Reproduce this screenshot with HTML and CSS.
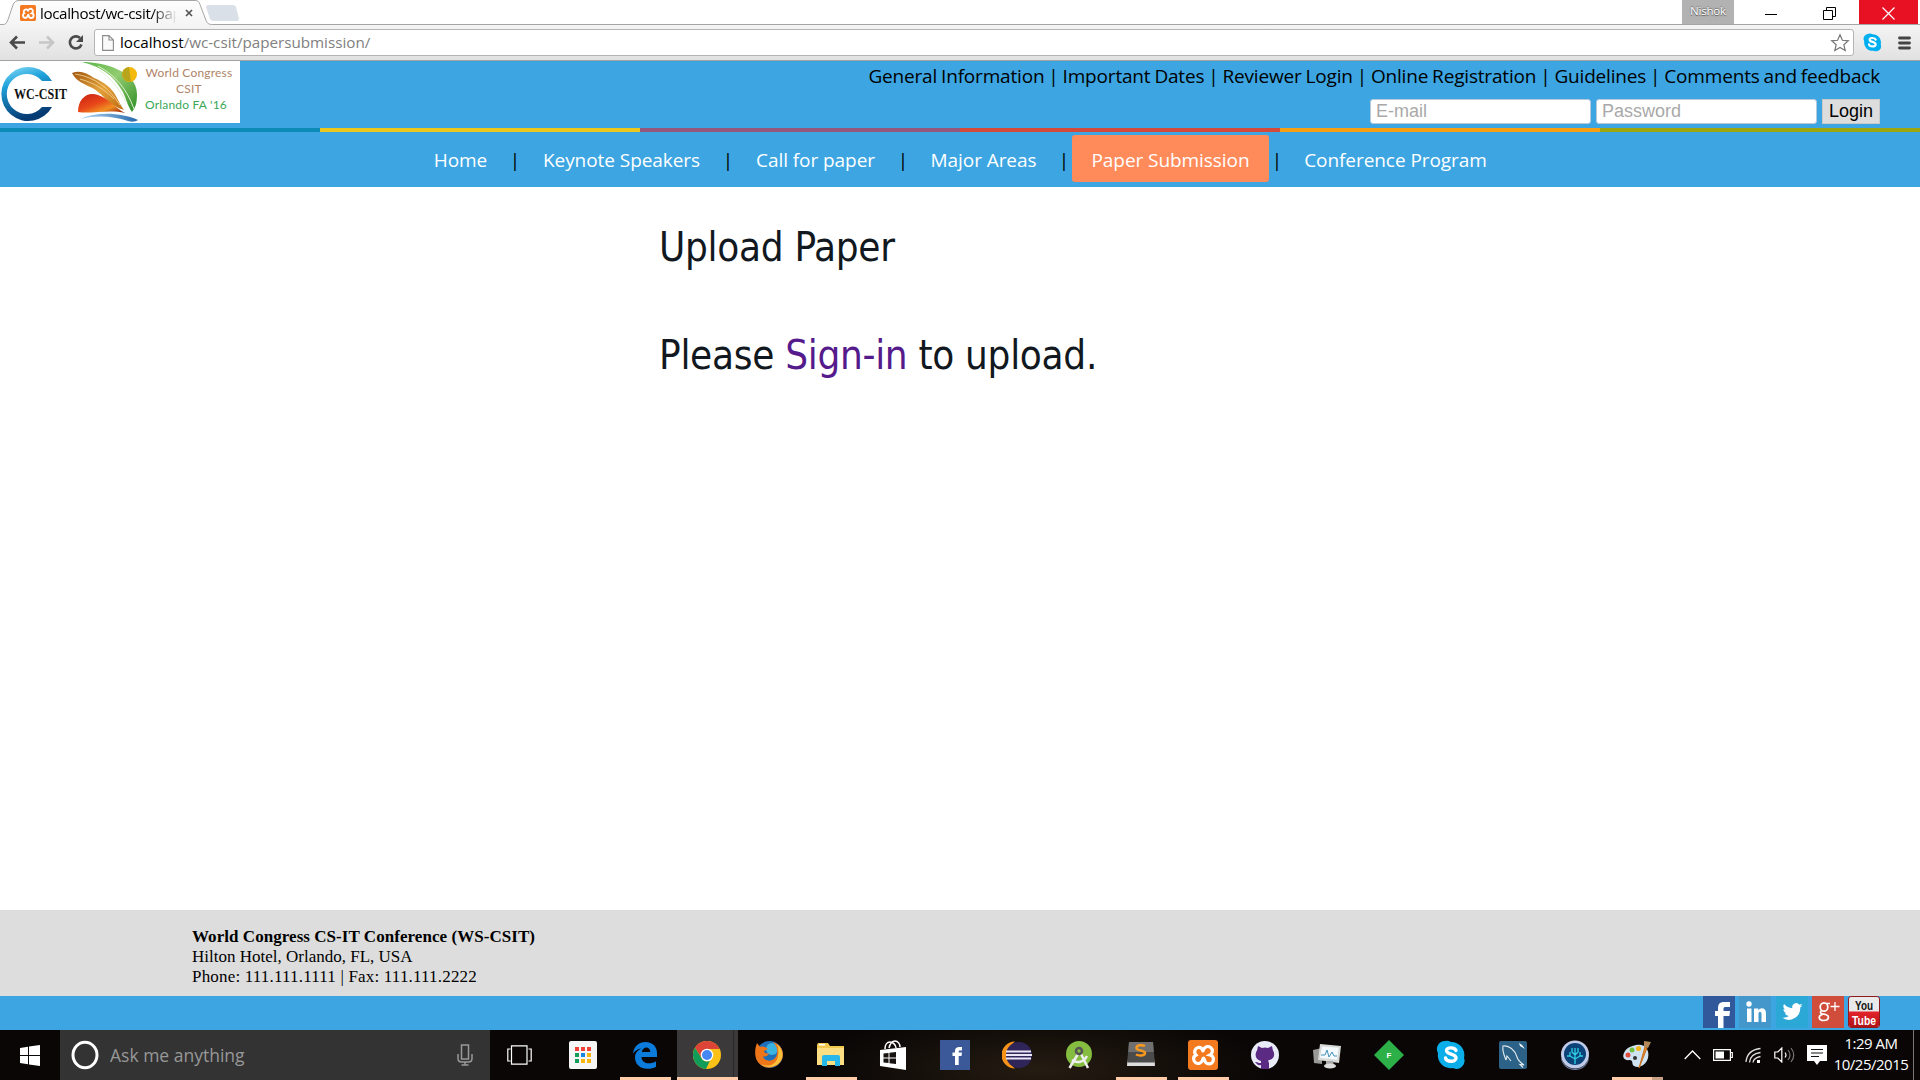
FILE: index.html
```html
<!DOCTYPE html>
<html lang="en">
<head>
<meta charset="utf-8">
<title>Paper Submission</title>
<link rel="stylesheet" href="styles.css">
</head>
<body>
<div class="tabstrip">
  <svg class="tabshape" width="1920" height="25" viewBox="0 0 1920 25">
    <defs><linearGradient id="tabg" x1="0" y1="0" x2="0" y2="1"><stop offset="0" stop-color="#fdfdfd"/><stop offset="1" stop-color="#f4f4f4"/></linearGradient></defs>
    <path d="M208 5h25q2 0 3 2l3 12q0 2-2 2h-24q-2 0-3-2l-4-12q0-2 2-2z" fill="#dae0e8"/>
    <path d="M-2 24.500H3c3 0 4-2 5-5L13 5c1-3 3-4.500 6-4.500H195c3 0 4 1 5 4l5.500 14.500c1 3.500 2.500 5.500 6 5.500H1922V27H-2z" fill="url(#tabg)" stroke="#a6a6a6"/>
  </svg>
  <div class="tab">
    <svg width="16" height="16" viewBox="0 0 30 30"><rect width="30" height="30" rx="3" fill="#f37a21"/><path d="M10 8.500a4.500 4.500 0 0 0-2 7a4.500 4.500 0 1 0 6.500 4.500q.5-2 1-2t1 2A4.500 4.500 0 1 0 22 15.500a4.500 4.500 0 1 0-6.500-5.500q-.5 2-1 0A4 4 0 0 0 10 8.500z" fill="none" stroke="#fff" stroke-width="3.500"/></svg>
    <span class="tabtitle">localhost/wc-csit/pap</span>
    <svg width="8" height="8" viewBox="0 0 8 8"><path d="M1 1l6 6M7 1L1 7" stroke="#555" stroke-width="1.700"/></svg>
  </div>
  <div class="winbtns">
    <span class="user">Nishok</span>
    <span class="wb"><svg width="12" height="12"><path d="M0 6.500h12" stroke="#000"/></svg></span>
    <span class="wb"><svg width="13" height="13" fill="none" stroke="#000"><path d="M.5 3.500h9v9h-9zM3.500 3V.5h9v9H10"/></svg></span>
    <span class="wb close"><svg width="13" height="13"><path d="M.5.5l12 12M12.500.5l-12 12" stroke="#fff" stroke-width="1.200"/></svg></span>
  </div>
</div>
<div class="toolbar">
  <svg class="navicons" width="84" height="20" viewBox="0 0 84 20" fill="none" stroke-width="2.600">
    <path d="M18 9.500H4M10 3.500l-6 6 6 6" stroke="#4a4a4a"/>
    <path d="M32 9.500h14M40 3.500l6 6-6 6" stroke="#c6c6c6"/>
    <path d="M73 5A6 6 0 1 0 74.500 11.500" stroke="#4a4a4a"/><path d="M76 2v7h-7z" fill="#4a4a4a"/>
  </svg>
  <div class="omnibox">
    <svg width="12" height="16" viewBox="0 0 12 16"><path d="M.6.6H7l4.400 4.400v10.400H.6zM7 .6V5h4.400" fill="#fafafa" stroke="#8b8b8b" stroke-width="1.100"/></svg>
    <span class="url">localhost<span>/wc-csit/papersubmission/</span></span>
    <svg width="20" height="20" viewBox="0 0 20 20"><path d="M10 1.800l2.400 5.500 5.900.5-4.500 3.900 1.400 5.900L10 14.500l-5.200 3.100 1.400-5.900L1.700 7.800l5.900-.5z" fill="#fff" stroke="#777" stroke-width="1.200"/></svg>
  </div>
  <svg width="19" height="19" viewBox="0 0 30 30"><path d="M9 1a8 8 0 0 1 6 1a13 13 0 0 1 13 16a8 8 0 0 1-11 10A13 13 0 0 1 2 13A8 8 0 0 1 9 1z" fill="#00aff0"/><path d="M20 10.500c-1-3-9.500-4-9.500 0 0 4.500 9.500 2.500 9.500 7.500 0 4.500-9.500 4-10.500 0" fill="none" stroke="#fff" stroke-width="3.400" stroke-linecap="round"/></svg>
  <svg width="13" height="14" viewBox="0 0 13 14"><path d="M1.500 2h10M1.500 7h10M1.500 12h10" stroke="#444" stroke-width="2.800" stroke-linecap="round"/></svg>
</div>

<header class="header">
  <div class="logo">
    <svg width="140" height="62" viewBox="0 0 140 62">
      <defs>
        <linearGradient id="cg" x1="0" y1="0" x2=".3" y2="1"><stop offset="0" stop-color="#8fe0f8"/><stop offset=".35" stop-color="#1fa2db"/><stop offset="1" stop-color="#063a73"/></linearGradient>
        <linearGradient id="or" x1="0" y1="0" x2="1" y2="1"><stop offset="0" stop-color="#a0560f"/><stop offset=".5" stop-color="#e3a23a"/><stop offset="1" stop-color="#c06b12"/></linearGradient>
        <linearGradient id="gr" x1="0" y1="0" x2="1" y2="1"><stop offset="0" stop-color="#58b548"/><stop offset=".45" stop-color="#93cc70"/><stop offset="1" stop-color="#2c8d26"/></linearGradient>
        <linearGradient id="rd" x1="0" y1="0" x2="1" y2="1"><stop offset="0" stop-color="#c81f12"/><stop offset=".45" stop-color="#e8481a"/><stop offset=".7" stop-color="#f09022"/><stop offset="1" stop-color="#8d0f09"/></linearGradient>
        <linearGradient id="bl"><stop offset="0" stop-color="#b8dcf5"/><stop offset="1" stop-color="#2467ac"/></linearGradient>
      </defs>
      <path d="M52 20A27 27 0 1 0 52 46H42A20 20 0 1 1 42 20z" fill="url(#cg)"/>
      <path d="M82 1c22 0 55 9 55 32 0 8-1 13-5 18-5-6-6-16-11-23C113 15 102 6 82 1z" fill="url(#gr)"/>
      <path d="M98 5c17 9 29 23 36 43M99 9c12 8 21 20 27 32" fill="none" stroke="#dff0cf" stroke-width="1"/>
      <path d="M72 12c8-3 15 0 22 5 5 2 12 6 16 10 7 7 8 14 14 22-14-4-18-12-26-18-4-4-8-5-12-7-6-3-11-6-14-12z" fill="url(#or)"/>
      <path d="M75 13c20 3 34 14 45 31M80 18c14 4 24 10 34 20" fill="none" stroke="#f7d79a" stroke-width=".8"/>
      <path d="M78 51C78 38 87 30 98 34c10 3 16 12 27 18-15-4-33 1-47-1z" fill="url(#rd)"/>
      <circle cx="129.500" cy="13.500" r="7.500" fill="#f3b90c"/><path d="M122 13a7.500 7.500 0 0 1 7-7l2 14.500a7.500 7.500 0 0 1-9-7.500z" fill="#b8a51c"/>
      <path d="M80 58c18-8 42-6 58 1-3 2-6 2-10 1-15-5-31-6-48-2z" fill="url(#bl)"/>
      <text x="14" y="38" class="lg" textLength="53" lengthAdjust="spacingAndGlyphs">WC-CSIT</text>
    </svg>
    <div class="logotext"><span>World Congress</span><span>CSIT</span><span class="green">Orlando FA '16</span></div>
  </div>
  <div class="headright">
    <div class="toplinks">General Information | Important Dates | Reviewer Login | Online Registration | Guidelines | Comments and feedback</div>
    <form class="login">
      <input type="text" placeholder="E-mail"><input type="password" placeholder="Password"><button type="button">Login</button>
    </form>
  </div>
</header>
<div class="stripe"><i class="c1"></i><i class="c2"></i><i class="c3"></i><i class="c4"></i><i class="c5"></i><i class="c6"></i></div>
<nav class="menu">
  <a class="w1">Home</a><b>|</b><a class="w2">Keynote Speakers</a><b>|</b><a class="w3">Call for paper</a><b>|</b><a class="w4">Major Areas</a><b>|</b><a class="w2 active">Paper Submission</a><b>|</b><a class="w5">Conference Program</a>
</nav>
<main class="content">
  <h1>Upload Paper</h1>
  <h1>Please <a>Sign-in</a> to upload.</h1>
</main>
<footer class="footer">
  <strong>World Congress CS-IT Conference (WS-CSIT)</strong>
  <span>Hilton Hotel, Orlando, FL, USA</span>
  <span class="phone">Phone: 111.111.1111 | Fax: 111.111.2222</span>
</footer>
<div class="social">
  <svg width="32" height="32"><rect width="32" height="32" fill="#30589b"/><path d="M15 32V20h-3v-5h3v-3c0-4 2-6 6-6h6v5h-4c-2 0-2.500.6-2.500 2v2H27l-.6 5h-5.900v12z" fill="#fff"/></svg>
  <svg width="32" height="32"><rect width="32" height="32" fill="#4397cb"/><circle cx="10" cy="8" r="2.700" fill="#fff"/><path d="M8 12.500h4.500V26H8zM15 12.500h4.300v2c2-3.500 7.700-3 7.700 2.500v9h-4.500v-8c0-3-3-3-3 0v8H15z" fill="#fff"/></svg>
  <svg width="32" height="32"><rect width="32" height="32" fill="#2ca8d6"/><path d="M26.500 9.300a8 8 0 0 1-2.300.6 4 4 0 0 0 1.700-2.200 8 8 0 0 1-2.500 1 4 4 0 0 0-7 3.600 11.500 11.500 0 0 1-8.300-4.200 4 4 0 0 0 1.200 5.400 4 4 0 0 1-1.800-.5 4 4 0 0 0 3.200 4 4 4 0 0 1-1.800.1 4 4 0 0 0 3.800 2.800A8 8 0 0 1 6 21.600 11.500 11.500 0 0 0 24.200 11.500a8 8 0 0 0 2.300-2.200z" fill="#fff"/></svg>
  <svg width="32" height="32"><rect width="32" height="32" fill="#d04c3b"/><g fill="none" stroke="#fff" stroke-width="1.700"><ellipse cx="12" cy="11" rx="3.800" ry="4.200"/><path d="M14 7.500h4M9.500 14.500c-3 3 1 3.500 4 4 4.500 1 3.500 6-1.500 6-6 0-6-5-1.500-6" /></g><path d="M23 6v9M18.500 10.500h9" stroke="#fff" stroke-width="1.300"/></svg>
  <svg width="32" height="32"><defs><linearGradient id="yr" x1="0" y1="0" x2="0" y2="1"><stop offset="0" stop-color="#e5242a"/><stop offset="1" stop-color="#b01217"/></linearGradient></defs><rect x=".5" y=".5" width="31" height="31" rx="2.500" fill="#e9e9e9" stroke="#8f1c1c"/><path d="M1 15.500h30V29q0 2-2 2H3q-2 0-2-2z" fill="url(#yr)"/><text x="7" y="13.500" class="yt" textLength="18" lengthAdjust="spacingAndGlyphs">You</text><text x="4" y="28.500" class="yt white" textLength="24" lengthAdjust="spacingAndGlyphs">Tube</text></svg>
</div>

<div class="taskbar">
  <div class="start"><svg width="20" height="21" viewBox="0 0 20 21" fill="#fff"><path d="M0 3l8-1.200V10H0zM9 1.600L20 0v10H9zM0 11h8v8.300L0 18zM9 11h11v10L9 19.400z"/></svg></div>
  <div class="search">
    <svg width="28" height="30" viewBox="0 0 28 30"><ellipse cx="14" cy="15" rx="12" ry="12.800" fill="none" stroke="#fff" stroke-width="3"/></svg>
    <span>Ask me anything</span>
    <svg width="16" height="22" viewBox="0 0 16 22" fill="none" stroke="#999" stroke-width="1.500"><rect x="4.500" y="1" width="7" height="14"/><path d="M1 10v4.500q0 3.500 3.500 3.500h7q3.500 0 3.500-3.500V10M8 18v3M4.500 21h7"/></svg>
  </div>
  <div class="taskview"><svg width="25" height="20" viewBox="0 0 25 20" fill="none" stroke="#fff" stroke-width="1.200"><path d="M4.500.8h15.500v18.400H4.500zM3.500 4H.8v12h2.700M21.500 4h2.700v12h-2.700"/></svg></div>
  <div class="apps">
    <div class="app"><svg viewBox="0 0 30 30"><rect x="1" y="1" width="28" height="28" rx="2" fill="#f6f6f6"/><path d="M7 7h4v4H7zM13 7h4v4h-4zM19 7h4v4h-4z" fill="#ef4136"/><path d="M7 13h4v4H7zM7 19h4v4H7z" fill="#149d58"/><path d="M13 13h4v4h-4z" fill="#1a86e0"/><path d="M19 13h4v4h-4zM13 19h4v4h-4zM19 19h4v4h-4z" fill="#fbb60d"/></svg></div>
    <div class="app run"><svg viewBox="0 0 30 30"><path d="M3 13.500C4 6 9 2 15.500 2 23 2 27 7 27 13v4H11.500c0 4 3.500 6.300 7 6.300 3 0 5.500-.6 7.500-2v5.500c-2.500 1.400-5 2-8.500 2C10 28.800 5 24 5 17.500c0-4 2.500-7.500 6.500-9C7.500 8.800 4.800 11 3 13.500zM11.800 12h8.500c0-6-7.500-6-8.500 0z" fill="#0b7bdc"/></svg></div>
    <div class="app run chrome"><svg viewBox="0 0 30 30"><circle cx="15" cy="15" r="14" fill="#fbc116"/><path d="M15 9h12.600A14 14 0 0 0 3 7.800L9.500 18z" fill="#dc4437"/><path d="M3 7.800L9.700 18.500A6 6 0 0 0 18 20.500L14 29A14 14 0 0 1 3 7.800z" fill="#119d59"/><circle cx="15" cy="15" r="6.300" fill="#fff"/><circle cx="15" cy="15" r="5" fill="#4587f3"/></svg></div>
    <div class="app"><svg viewBox="0 0 30 30"><circle cx="15.500" cy="14.500" r="13.500" fill="#1e6fb8"/><circle cx="18" cy="9" r="6" fill="#39b3df"/><path d="M2 6l1-3 3 4c3-1 6 0 8 2l-4 2c0 2 3 3 5 2-1 4-5 4-6 3 1 6 12 7 14-2 1-5-1-9-4-12 9 3 11 10 9.500 16A14 14 0 0 1 1.200 14Q1 9 2 6z" fill="#ef7519"/><path d="M23 4c7 6 7 15 1 20-5 4-13 4-17 0 8 4 16 0 17-8 1-5 0-9-1-12z" fill="#f9c13a"/></svg></div>
    <div class="app run"><svg viewBox="0 0 30 30"><path d="M2 3h10l2 3h14v19H1V5z" fill="#f2c94f"/><path d="M1 8h27v17H1z" fill="#fcdf82"/><path d="M3 4h6v1.500H3z" fill="#fff"/><path d="M6 26V17q0-2 2-2h14q2 0 2 2v9h-5v-5h-8v5z" fill="#28b7ea"/></svg></div>
    <div class="app"><svg viewBox="0 0 30 30"><path d="M2 10l26-3v23L2 26z" fill="#fff"/><path d="M7 9c0-4 2-7 5-7s6 3 6 6M11 8c1-4 3-7 6-7s5 3 5 6" fill="none" stroke="#fff" stroke-width="1.500"/><path d="M5.500 13.500l5-.6v4.600h-5zM11.500 12.800l6.500-.8v5.500h-6.500zM5.500 18.500h5V23l-5-.6zM11.500 18.500H18V24l-6.500-.8z" fill="#15120f"/></svg></div>
    <div class="app"><svg viewBox="0 0 30 30"><rect width="30" height="30" fill="#3b5998"/><path d="M15 25V16h-2.500v-3.500H15V11c0-3 1.500-4 4.500-4H22v3.500h-2c-1 0-1.300.4-1.300 1.300v.7H22l-.5 3.500h-2.800v9z" fill="#fff"/></svg></div>
    <div class="app"><svg viewBox="0 0 30 30"><path d="M13 1.500a13.500 13.500 0 0 0 0 27A17 17 0 0 1 13 1.500z" fill="#f79319"/><circle cx="17" cy="15" r="13" fill="#2f2558"/><path d="M4 11.500h25M4 15h26M4 18.500h25" stroke="#e9e6f5" stroke-width="2"/></svg></div>
    <div class="app"><svg viewBox="0 0 30 30"><circle cx="15" cy="14" r="13" fill="#84bd3f"/><path d="M14 14L5.500 28M17 14l7 14M8 20c5 4 12 2 15-4" fill="none" stroke="#eee" stroke-width="2.500"/><circle cx="15" cy="11" r="3" fill="none" stroke="#555" stroke-width="2.500"/></svg></div>
    <div class="app run"><svg viewBox="0 0 30 30"><path d="M3 2h24l2 22H1z" fill="#4b4b4b"/><path d="M3 2h24l.8 10H2.200z" fill="#707070"/><path d="M1.500 19L1 26h28l-.5-7v3.500H1.500z" fill="#ddd"/><path d="M19 6c-3-1.500-8.500-1-8.500 2 0 3.300 8.500 1.700 8.500 5 0 3-6 3-9 1.500" fill="none" stroke="#f8981d" stroke-width="2.500"/></svg></div>
    <div class="app run"><svg viewBox="0 0 30 30"><rect width="30" height="30" rx="3" fill="#f47a20"/><path d="M10 7.500a4.500 4.500 0 0 0-2 7.500 4.500 4.500 0 1 0 6.500 5q.5-2 1-2t1 2A4.500 4.500 0 1 0 22 15a4.500 4.500 0 1 0-6.500-5q-.5 2-1 0A4 4 0 0 0 10 7.500z" fill="none" stroke="#fff" stroke-width="3.200"/></svg></div>
    <div class="app"><svg viewBox="0 0 30 30"><circle cx="15" cy="15" r="14" fill="#e9ebf8"/><path d="M8 6l4 2q3-.8 6 0l4-2 .8 4c3 5 1 9.500-4.800 10.500l1 2.500v6h-8v-4c-3 1-4-1-6-3 3-.5 3 1.500 6 1v-2C5 19.500 4.500 14 7.200 10z" fill="#5b2a83"/></svg></div>
    <div class="app"><svg viewBox="0 0 30 30"><path d="M1 10l9-2v16l-8-1z" fill="#999"/><path d="M8 4l21 2-2 17-21-3z" fill="#d8dad8"/><path d="M10 6.500l16.500 1.300-1.500 12-17-2z" fill="#f3f9fc"/><path d="M9 15h4l2-5 2 7 3-5 2 4h3" fill="none" stroke="#4392bb"/><path d="M14 21h7l1 5h-8z" fill="#aaa"/><ellipse cx="18" cy="26" rx="6" ry="2.500" fill="#ddd"/></svg></div>
    <div class="app"><svg viewBox="0 0 30 30"><path d="M15 0l15 15-15 15L0 15z" fill="#2db048"/><text x="15" y="18" text-anchor="middle" class="fl">F</text></svg></div>
    <div class="app"><svg viewBox="0 0 30 30"><path d="M9 1a8 8 0 0 1 6 1a13 13 0 0 1 13 16a8 8 0 0 1-11 10A13 13 0 0 1 2 13A8 8 0 0 1 9 1z" fill="#0caeea"/><path d="M20 10.500c-1-3-9.500-4-9.500 0 0 4.500 9.500 2.500 9.500 7.500 0 4.500-9.500 4-10.500 0" fill="none" stroke="#fff" stroke-width="3.400" stroke-linecap="round"/></svg></div>
    <div class="app"><svg viewBox="0 0 30 30"><rect x="1" y="1" width="28" height="28" rx="2" fill="#2c6288"/><path d="M8 20c-2-5-4-9-3-14 6-1 12 4 14 11 1 4 4 6 7 8l-4-.5 3 3M8 20l1-4 4 5" fill="none" stroke="#dfe9ef" stroke-width="1.100"/><path d="M21 3l3 2 3 4-5-3z" fill="#fff"/></svg></div>
    <div class="app"><svg viewBox="0 0 30 30"><path d="M1 15a14 14 0 0 0 28 0v2a14 13 0 0 1-28 0z" fill="#7783a8"/><circle cx="15" cy="14.500" r="14" fill="#bfcbe8"/><circle cx="15" cy="14" r="11" fill="#0b4378"/><path d="M15 24V8M15 19l-5-3v-4M15 19l5-3v-4M15 15l-3-3V8M15 15l3-3V8M10 16H7M20 16h3" fill="none" stroke="#2fd0e6" stroke-width="1.300"/></svg></div>
    <div class="app run paint"><svg viewBox="0 0 30 30"><path d="M14 5c9-2 14 5 12 13-2 7-9 11-14 8-3-2 0-5-4-6C2 21 0 17 2 13c2-5 7-7 12-8z" fill="#cfe3f2"/><circle cx="6" cy="15" r="2.500" fill="#e04a3a"/><circle cx="10" cy="10" r="2.500" fill="#72c043"/><circle cx="16.500" cy="8.500" r="2.500" fill="#f6b219"/><circle cx="13" cy="18" r="2" fill="#333"/><path d="M23 7l2 1-8 20z" fill="#ed8b27" stroke="#c96d1b"/><path d="M22 1l7 1-3 6-4-1z" fill="#b28a5a"/></svg></div>
  </div>
  <div class="tray">
    <svg width="17" height="10" viewBox="0 0 17 10"><path d="M.7 9L8.500 1l7.800 8" fill="none" stroke="#fff" stroke-width="1.300"/></svg>
    <svg width="20" height="12" viewBox="0 0 20 12"><path d="M.6.6h16.800v10.800H.6zM18 3.500h1.300v5H18" fill="none" stroke="#fff" stroke-width="1.200"/><path d="M2.500 2.500H11v7H2.500z" fill="#fff"/></svg>
    <svg width="17" height="17" viewBox="0 0 17 17" fill="none" stroke="#ddd" stroke-width="1.300"><path d="M1 15Q2 3 15.500 1.500M4.500 15.500Q5 7 15.500 5.500M8 15.500Q8.500 11 15.500 9.500"/><path d="M12 13h3v3h-3z" fill="#fff" stroke="none"/></svg>
    <svg width="21" height="16" viewBox="0 0 21 16" fill="none" stroke="#fff" stroke-width="1.200"><path d="M.8 5h3l4-4v14l-4-4h-3zM11 5.500q2 2.500 0 5"/><path d="M14 3q4 5 0 10M17 1q5.500 7 0 14" stroke="#777"/></svg>
    <svg width="20" height="20" viewBox="0 0 20 20"><path d="M0 0h20v16h-7l-3 4-3-4H0z" fill="#fff"/><path d="M4 4.500h12M4 8h12M4 11.500h8" stroke="#111" stroke-width="1.200"/></svg>
    <div class="clock"><span>1:29 AM</span><span>10/25/2015</span></div>
  </div>
</div>
</body>
</html>
```
FILE: styles.css
```css
* { box-sizing: border-box; }
body { margin: 0; width: 1920px; height: 1080px; overflow: hidden; display: flex; flex-direction: column; background: #fff; font-family: "Open Sans", "Noto Sans", sans-serif; color: #000; }
svg { display: block; flex: none; }

.tabstrip { position: relative; height: 25px; flex: none; display: flex; justify-content: space-between; }
.tabshape { position: absolute; left: 0; top: 0; }
.tab { position: relative; display: flex; align-items: center; padding: 1px 0 0 20px; height: 25px; }
.tabtitle { width: 139px; margin: 0 6px 0 4px; font-size: 15.200px; letter-spacing: -.38px; line-height: 24px; white-space: nowrap; -webkit-mask-image: linear-gradient(90deg, #000 112px, transparent 137px); mask-image: linear-gradient(90deg, #000 112px, transparent 137px); }
.winbtns { position: relative; display: flex; padding-right: 2px; height: 24px; }
.user { width: 52px; background: #b2b2b2; color: #fff; font-size: 11.500px; line-height: 22px; text-align: center; text-shadow: 0 1px 1px #555, 0 -1px 1px #777; letter-spacing: -.2px; margin-right: 7px; }
.wb { width: 59px; display: flex; align-items: center; justify-content: center; padding-top: 3px; }
.close { background: #e81123; }

.toolbar { height: 36px; flex: none; background: linear-gradient(#f4f4f4, #e1e1e1); border-bottom: 1px solid #a3a3a3; display: flex; align-items: center; padding: 0 9px 0 7px; }
.navicons { margin-right: 3px; }
.omnibox { width: 1760px; height: 27px; background: #fff; border: 1px solid #b4b4b4; border-radius: 3px; display: flex; align-items: center; padding: 0 3px 0 7px; margin-right: 9px; }
.omnibox + svg { margin-right: 16px; }
.url { flex: 1; font-size: 15.200px; line-height: 22px; padding-bottom: 2px; margin-left: 6px; }
.url span { color: #808080; }

.header { height: 67px; flex: none; background: #3ca5e2; display: flex; justify-content: space-between; padding-right: 40px; }
.logo { width: 240px; height: 62px; background: #fff; display: flex; }
.lg { font: bold 14px "Liberation Serif", serif; fill: #111; }
.logotext { width: 100px; display: flex; flex-direction: column; align-items: center; padding-top: 4px; font: 12px/16px Lato, sans-serif; color: #b08468; padding-right: 2px; white-space: nowrap; letter-spacing: .2px; }
.logotext .green { color: #3aa757; margin-left: -6px; }
.headright { display: flex; flex-direction: column; align-items: flex-end; padding-top: 2px; }
.toplinks { font-size: 19px; line-height: 27px; letter-spacing: -.18px; word-spacing: -.8px; white-space: nowrap; }
.login { display: flex; gap: 5px; margin: 9px 0 0; }
.login input { width: 221px; height: 25px; border: 1px solid #b9c9dc; border-radius: 3px; padding: 0 5px; background: #fff; font: 18px "Liberation Sans", sans-serif; outline: none; }
.login input::placeholder { color: #a9a9a9; opacity: 1; }
.login button { width: 58px; height: 25px; border: 1px solid #c9c9c9; padding: 0; background: #ddd; color: #000; font: 18px "Liberation Sans", sans-serif; }
.stripe { height: 4px; flex: none; display: grid; grid-template-columns: repeat(6, 320px); }
.c1 { background: #0b8bb5; }
.c2 { background: #ecc71c; }
.c3 { background: #94587d; }
.c4 { background: #d44a3a; }
.c5 { background: #f7a014; }
.c6 { background: #9ea60f; }
.menu { height: 55px; flex: none; background: #3ca5e2; display: flex; justify-content: center; padding-top: 3px; font-size: 19px; line-height: 51px; letter-spacing: -.06px; }
.menu a { height: 47px; text-align: center; color: #fff; white-space: nowrap; border-radius: 3px; }
.menu b { width: 16px; text-align: center; font-weight: 400; line-height: 51px; }
.menu .active { background: #ff8a5a; }
.w1 { width: 93px; }
.w2 { width: 197px; }
.w3 { width: 159px; }
.w4 { width: 145px; }
.w5 { width: 221px; }

.content { flex: 1; padding: 36px 0 0 659px; }
.content h1 { margin: 0 0 60px; font: 40px/48px "DejaVu Sans Condensed", "DejaVu Sans", sans-serif; font-stretch: condensed; letter-spacing: -.3px; color: #111820; }
.content h1 a { color: #551a8b; }

.footer { height: 86px; flex: none; background: #ddd; padding: 17px 0 0 192px; display: flex; flex-direction: column; font: 17px/20px "Liberation Serif", serif; }
.footer strong { letter-spacing: .05px; }
.phone { letter-spacing: .18px; }
.social { height: 34px; flex: none; background: #3ca5e2; display: flex; justify-content: flex-end; gap: 4.250px; padding-right: 40px; }
.yt { font: bold 13px "Liberation Sans", sans-serif; fill: #111; }
.white { fill: #fff; }

.taskbar { height: 50px; flex: none; display: flex; background: radial-gradient(ellipse 230px 60px at 1040px 40px, #251c12, transparent), #090605; }
.start { width: 60px; flex: none; display: flex; align-items: center; justify-content: center; }
.search { width: 430px; flex: none; background: #333; display: flex; align-items: center; padding: 0 17px 0 11px; }
.search span { flex: 1; margin-left: 11px; font-size: 17.500px; color: #989898; }
.taskview { width: 62px; flex: none; padding-right: 3px; display: flex; align-items: center; justify-content: center; }
.apps { display: flex; flex: none; }
.app { width: 62px; height: 50px; display: flex; align-items: center; justify-content: center; }
.app svg { width: 30px; height: 30px; }
.run { background: linear-gradient(#ffcba8, #ffcba8) 6px 47px / 51px 3px no-repeat; }
.chrome { background: linear-gradient(#ffcba8, #ffcba8) 1px 47px / 61px 3px no-repeat, linear-gradient(90deg, transparent 1px, #3b3939 1px, #3b3939 57px, #282626 57px, #282626 58px, #3b3939 58px); }
.paint { background: linear-gradient(90deg, #ffcba8 40px, #c9a187 40px) 6px 47px / 51px 3px no-repeat; }
.fl { font: bold 8px "Liberation Sans", sans-serif; fill: #fff; }
.tray { flex: none; width: 236px; display: flex; align-items: center; margin-left: 16px; gap: 12px; }
.clock { flex: none; width: 79px; height: 50px; border-right: 1px solid #777; margin-left: -4px; padding: 3px 6px 0 0; display: flex; flex-direction: column; align-items: center; color: #fff; font-size: 15px; line-height: 21px; letter-spacing: -.5px; white-space: nowrap; }
```
